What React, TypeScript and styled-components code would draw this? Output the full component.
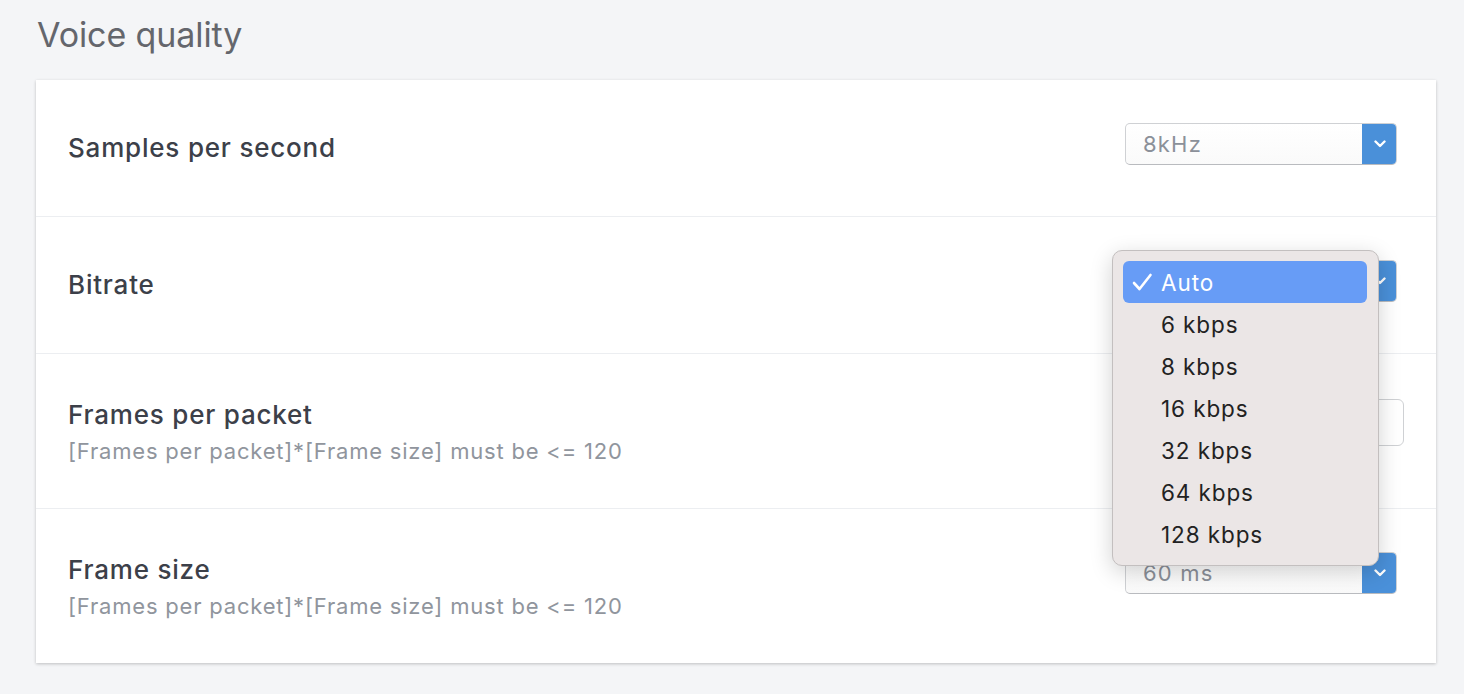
import React from 'react';
import styled, { createGlobalStyle } from 'styled-components';

const GlobalStyle = createGlobalStyle`
  html, body {
    margin: 0;
    padding: 0;
    background: #f4f5f7;
    font-family: Inter, "Noto Sans", "Liberation Sans", sans-serif;
  }
`;

const Page = styled.div`
  padding: 12px 28px 32px 36px;
`;

const Title = styled.h2`
  margin: 0 0 22px 1px;
  font-size: 34px;
  line-height: 46px;
  font-weight: 400;
  color: #64666c;
  letter-spacing: -0.1px;
`;

const Card = styled.div`
  background: #fff;
  box-shadow: 0 1px 3px rgba(0, 0, 0, 0.22);
`;

const Row = styled.div<{ last?: boolean }>`
  display: flex;
  align-items: center;
  justify-content: space-between;
  padding: 44px 39px 44px 32px;
  border-bottom: ${p => (p.last ? 'none' : '1px solid #eceef1')};
`;

const TextBlock = styled.div`
  display: flex;
  flex-direction: column;
`;

const Label = styled.div`
  font-size: 26px;
  line-height: 34px;
  font-weight: 500;
  letter-spacing: 0.8px;
  color: #3c4049;
`;

const Description = styled.div`
  margin-top: 6px;
  font-size: 22px;
  line-height: 26px;
  letter-spacing: 0.8px;
  color: #90959d;
`;

const ControlSlot = styled.div`
  position: relative;
  align-self: flex-start;
  height: 48px;
  display: flex;
  align-items: flex-start;
  justify-content: flex-end;
`;

const SelectBox = styled.div`
  display: flex;
  width: 272px;
  height: 42px;
  margin-top: -1px;
  box-sizing: border-box;
  border: 1px solid #cfd1d4;
  border-bottom-color: #b9bbbf;
  border-radius: 5px;
  background: linear-gradient(#ffffff, #fafafa);
  overflow: hidden;
`;

const SelectValue = styled.div`
  flex: 1;
  display: flex;
  align-items: center;
  padding-left: 17px;
  font-size: 22px;
  letter-spacing: 1.2px;
  color: #8b9099;
`;

const SelectButton = styled.div`
  width: 35px;
  margin: -1px -1px -1px 0;
  background: #4a90d9;
  display: flex;
  align-items: center;
  justify-content: center;
`;

const TextInput = styled.div`
  width: 279px;
  height: 47px;
  margin-right: -7px;
  margin-top: 1px;
  box-sizing: border-box;
  border: 1px solid #cfd1d4;
  border-radius: 6px;
  background: #fff;
`;

const Popup = styled.div`
  position: absolute;
  z-index: 10;
  left: -13px;
  top: -11px;
  width: 267px;
  box-sizing: border-box;
  padding: 10px 11px 10px 10px;
  background: #ebe6e6;
  border: 1px solid #c3bfbf;
  border-radius: 10px;
  box-shadow: 0 6px 22px rgba(0, 0, 0, 0.18);
`;

const Option = styled.div<{ selected?: boolean }>`
  position: relative;
  height: 42px;
  display: flex;
  align-items: center;
  padding-left: 38px;
  border-radius: 6px;
  font-size: 22.5px;
  letter-spacing: 0.9px;
  color: ${p => (p.selected ? '#fff' : '#222')};
  background: ${p => (p.selected ? '#679cf6' : 'transparent')};
`;

const Check = styled.svg`
  position: absolute;
  left: 9px;
  top: 12px;
`;

const Chevron = () => (
  <svg width="12" height="8" viewBox="0 0 12 8">
    <polyline points="1.5,1.5 6,6 10.5,1.5" fill="none" stroke="#fff" strokeWidth="2.4" strokeLinecap="round" strokeLinejoin="round" />
  </svg>
);

const Select: React.FC<{ value: string; children?: React.ReactNode }> = ({ value, children }) => (
  <ControlSlot>
    <SelectBox>
      <SelectValue>{value}</SelectValue>
      <SelectButton>
        <Chevron />
      </SelectButton>
    </SelectBox>
    {children}
  </ControlSlot>
);

const bitrates = ['Auto', '6 kbps', '8 kbps', '16 kbps', '32 kbps', '64 kbps', '128 kbps'];
const hint = '[Frames per packet]*[Frame size] must be <= 120';

export default function App() {
  return (
    <Page>
      <GlobalStyle />
      <Title>Voice quality</Title>
      <Card>
        <Row>
          <TextBlock>
            <Label>Samples per second</Label>
          </TextBlock>
          <Select value="8kHz" />
        </Row>
        <Row>
          <TextBlock>
            <Label>Bitrate</Label>
          </TextBlock>
          <Select value="Auto">
            <Popup>
              {bitrates.map((b, i) => (
                <Option key={b} selected={i === 0}>
                  {i === 0 && (
                    <Check width="21" height="19" viewBox="0 0 21 19">
                      <polyline points="2,10 7.5,16 18.5,2" fill="none" stroke="#fff" strokeWidth="2.6" strokeLinecap="round" strokeLinejoin="round" />
                    </Check>
                  )}
                  {b}
                </Option>
              ))}
            </Popup>
          </Select>
        </Row>
        <Row>
          <TextBlock>
            <Label>Frames per packet</Label>
            <Description>{hint}</Description>
          </TextBlock>
          <ControlSlot>
            <TextInput />
          </ControlSlot>
        </Row>
        <Row last>
          <TextBlock>
            <Label>Frame size</Label>
            <Description>{hint}</Description>
          </TextBlock>
          <Select value="60 ms" />
        </Row>
      </Card>
    </Page>
  );
}
